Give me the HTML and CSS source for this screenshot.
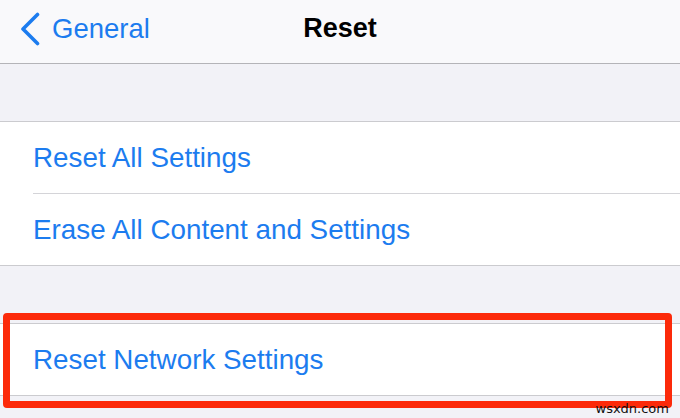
FILE: index.html
```html
<!DOCTYPE html>
<html lang="en">

<head>
  <meta charset="UTF-8" />
  <meta name="viewport" content="width=device-width, initial-scale=1.0" />
  <title>Reset</title>
  <link rel="stylesheet" href="styles.css">
</head>

<body>

  <!-- Navigation bar -->
  <div class="nav">
    <a href="#" class="back">
      <svg class="chevron" width="22" height="34" viewBox="0 0 22 34">
        <path d="M17.5 2.5 L3 17 L17.5 31.5" fill="none" stroke="#1c7cef" stroke-width="3.6" stroke-linecap="round" stroke-linejoin="round" />
      </svg>
      <span>General</span>
    </a>
    <h1 class="title">Reset</h1>
    <span></span>
  </div>

  <div class="spacer"></div>

  <div class="group">
    <div class="row">Reset All Settings</div>
    <div class="row">Erase All Content and Settings</div>
  </div>

  <div class="spacer"></div>

  <div class="group">
    <div class="row">Reset Network Settings</div>
  </div>

  <!-- highlight drawn over the network row -->
  <div class="highlight"></div>
  <span class="watermark">wsxdn.com</span>

</body>

</html>
```

FILE: styles.css
```css
body {
  margin: 0;
  background: #f2f2f7;
  font-family: 'Liberation Sans', Arial, sans-serif;
  height: 418px;
  overflow: hidden;
  position: relative;
}

.nav {
  height: 57px;
  padding-bottom: 6px;
  background: #f9f9fb;
  border-bottom: 1px solid #b4b4b8;
  display: grid;
  grid-template-columns: 1fr auto 1fr;
  align-items: center;
}

.back {
  display: flex;
  align-items: center;
  color: #1c7cef;
  text-decoration: none;
  font-size: 27.5px;
  padding-left: 20px;
}

.chevron {
  margin-right: 10px;
  margin-top: 1px;
}

.title {
  margin: 0;
  font-size: 27px;
  font-weight: bold;
  color: #000;
}

.spacer {
  height: 57px;
}

.group {
  background: #fff;
  border-top: 1px solid #cbcbcf;
  border-bottom: 1px solid #cbcbcf;
}

.row {
  height: 71px;
  margin-left: 33px;
  display: flex;
  align-items: center;
  color: #1c7cef;
  font-size: 27.8px;
}

.row + .row {
  border-top: 1px solid #d4d4d8;
}

.highlight {
  position: absolute;
  left: 3px;
  top: 313px;
  width: 655px;
  height: 81px;
  border: 7px solid #fc2a0a;
  border-radius: 4px;
}

.watermark {
  position: absolute;
  right: 11px;
  top: 401px;
  font-family: 'DejaVu Sans', sans-serif;
  font-size: 13px;
  color: #111;
}
```
